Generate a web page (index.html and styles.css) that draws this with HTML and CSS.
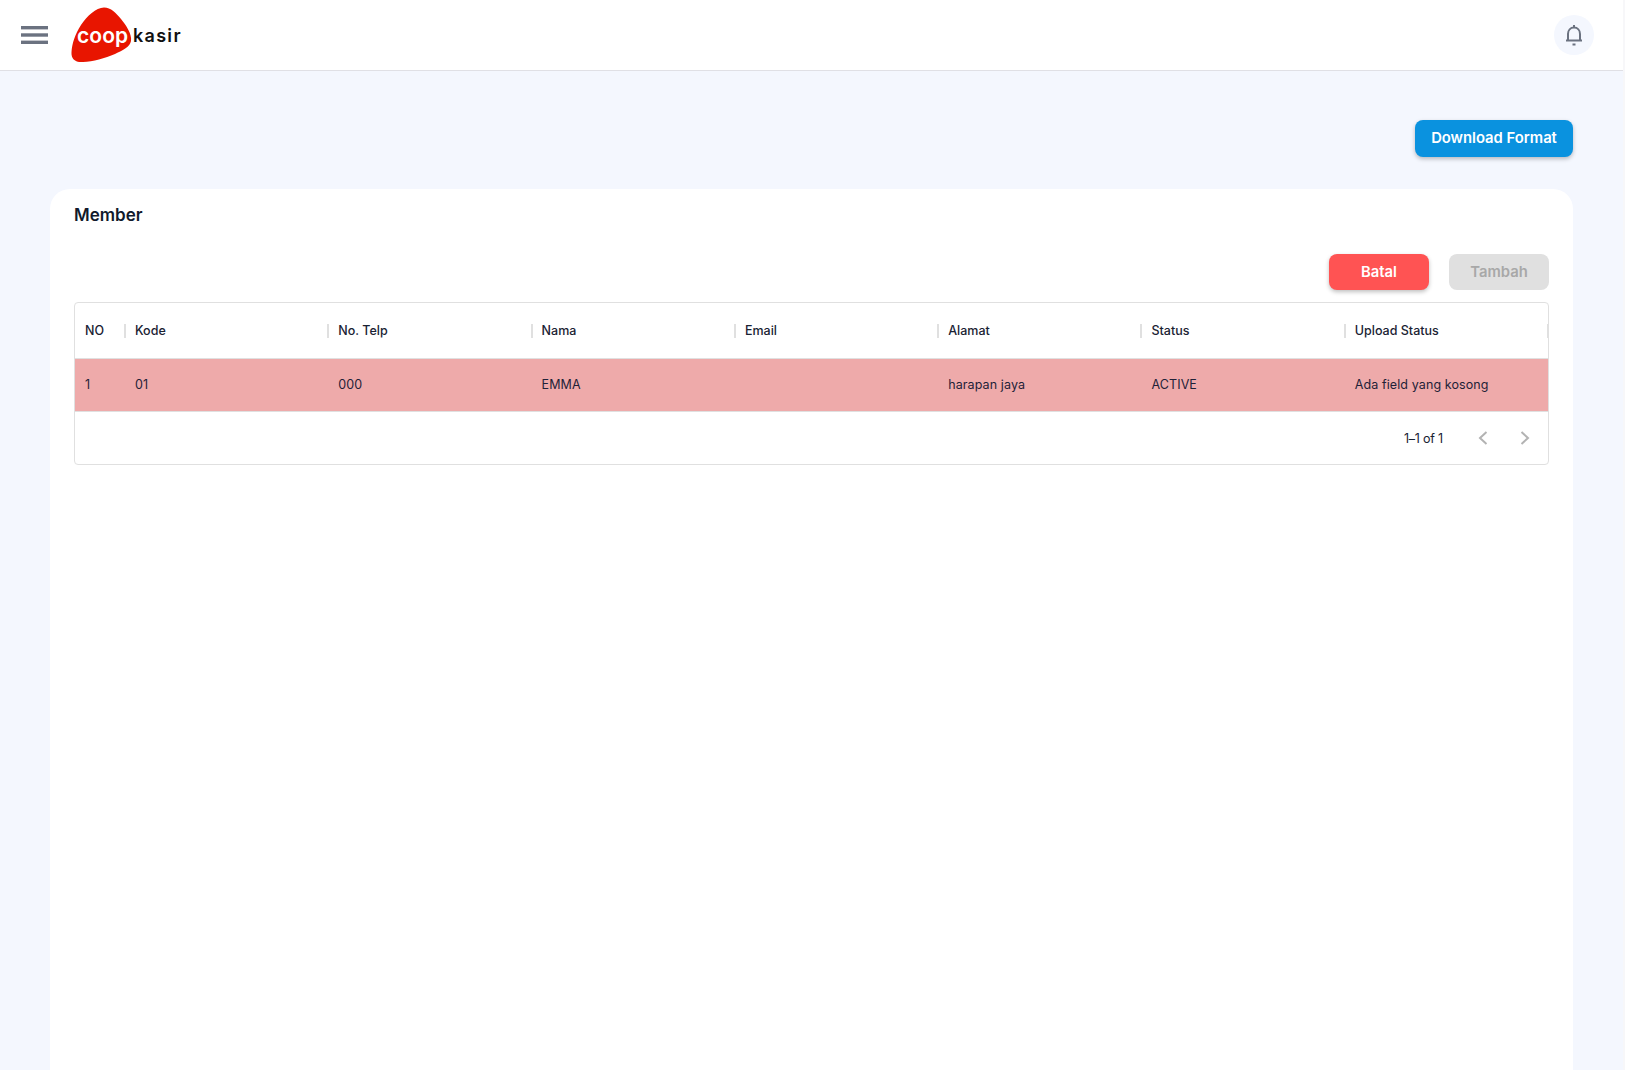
FILE: index.html
```html
<!DOCTYPE html>
<html lang="id">
<head>
<meta charset="utf-8">
<title>Member</title>
<link rel="stylesheet" href="styles.css">
</head>
<body>
<div class="page">
  <header class="topbar">
    <div class="brand">
      <svg class="burger" width="28" height="20" viewBox="0 0 28 20"><rect y="1" width="27" height="3.400" fill="#6b7280"/><rect y="8.300" width="27" height="3.400" fill="#6b7280"/><rect y="15.600" width="27" height="3.400" fill="#6b7280"/></svg>
      <div class="logo">
        <svg class="logo-mark" width="62" height="56" viewBox="0 0 62 56"><path d="M33 .5C40 .5 45 6 50 12C55 18 61 27 60 34C59 40 52 43 44 47C34 51 22 55 12 55C4 55.500 0 52 .5 45C1 37 4 27 10 18C16 9 25 .5 33 .5Z" fill="#e81500"/></svg>
        <span class="coop">coop</span><span class="kasir">kasir</span>
      </div>
    </div>
    <div class="bell">
      <svg width="20" height="22" viewBox="0 0 20 22"><path d="M10 1V3.500M4 16V10C4 6.200 6.500 3.500 10 3.500S16 6.200 16 10V16M2 16.500H18M8.500 20.500H11.500" fill="none" stroke="#6b7280" stroke-width="2"/></svg>
    </div>
  </header>
  <main class="content">
    <div class="actions"><button class="btn btn-download">Download Format</button></div>
    <section class="card">
      <h2 class="card-title">Member</h2>
      <div class="card-actions">
        <button class="btn btn-cancel">Batal</button>
        <button class="btn btn-add" disabled>Tambah</button>
      </div>
      <div class="table">
        <div class="row head">
          <div class="cell c-no">NO</div>
          <div class="cell c-col">Kode</div>
          <div class="cell c-col">No. Telp</div>
          <div class="cell c-col">Nama</div>
          <div class="cell c-col">Email</div>
          <div class="cell c-col">Alamat</div>
          <div class="cell c-col">Status</div>
          <div class="cell c-col c-last">Upload Status</div>
        </div>
        <div class="row data">
          <div class="cell c-no">1</div>
          <div class="cell c-col">01</div>
          <div class="cell c-col">000</div>
          <div class="cell c-col">EMMA</div>
          <div class="cell c-col"></div>
          <div class="cell c-col">harapan jaya</div>
          <div class="cell c-col">ACTIVE</div>
          <div class="cell c-col">Ada field yang kosong</div>
        </div>
        <div class="pager">
          <span class="pager-text">1–1 of 1</span>
          <svg class="chev" width="14" height="16" viewBox="0 0 14 16"><path d="M10.500 2L4 8L10.500 14" fill="none" stroke="#b3b3b3" stroke-width="2"/></svg>
          <svg class="chev" width="14" height="16" viewBox="0 0 14 16"><path d="M3.500 2L10 8L3.500 14" fill="none" stroke="#b3b3b3" stroke-width="2"/></svg>
        </div>
      </div>
    </section>
  </main>
</div>
</body>
</html>
```
FILE: styles.css
```css
* { box-sizing: border-box; }
html, body { margin: 0; height: 100%; overflow: hidden; background: #f7f7f9; }
body { font-family: Inter, "Liberation Sans", sans-serif; color: #1a2233; }
.page { width: 1623px; height: 1070px; overflow: hidden; background: #f4f7fe; }
.topbar { height: 71px; background: #fff; border-bottom: 1px solid #e0e0e5; display: flex; align-items: center; justify-content: space-between; padding: 0 29px 0 21px; }
.brand { display: flex; align-items: center; gap: 22px; }
.burger { display: block; }
.logo { display: flex; align-items: center; position: relative; width: 112px; height: 56px; }
.logo-mark { position: absolute; left: 0; top: 0; }
.coop { position: relative; z-index: 1; font-size: 21px; font-weight: 600; color: #fff; letter-spacing: 0.1px; width: 62px; padding-left: 6px; }
.kasir { font-size: 18px; font-weight: 600; color: #111; letter-spacing: 1.300px; }
.bell { width: 40px; height: 40px; border-radius: 50%; background: #f4f7fe; display: flex; align-items: center; justify-content: center; }
.content { padding: 49px 50px 0 50px; }
.actions { display: flex; justify-content: flex-end; margin-bottom: 32px; }
.btn { border: 0; border-radius: 8px; font-family: Inter, sans-serif; font-weight: 600; font-size: 14.800px; padding: 0 0 2px; }
.btn-download { width: 158px; height: 37px; background: #0a92df; color: #fff; box-shadow: 0 2px 4px rgba(0,0,0,.25); }
.card { background: #fff; border-radius: 20px; padding: 14px 24px 0; height: 900px; }
.card-title { margin: 0; font-size: 17px; line-height: 24px; font-weight: 600; color: #111a2c; }
.card-actions { display: flex; justify-content: flex-end; gap: 20px; margin-top: 27px; margin-bottom: 12px; }
.btn-cancel, .btn-add { width: 100px; height: 36px; padding-bottom: 1px; }
.btn-cancel { background: #ff5353; color: #fff; box-shadow: 0 2px 4px rgba(0,0,0,.25); }
.btn-add { background: #e0e0e0; color: #a8a8a8; }
.table { border: 1px solid #e0e0e0; border-radius: 4px; overflow: hidden; }
.row { display: grid; grid-template-columns: 50px repeat(7, 203.300px); font-size: 12.500px; }
.head { height: 56px; align-items: center; font-weight: 500; border-bottom: 1px solid #e0e0e0; }
.data { height: 53px; align-items: center; background: #eeaaaa; border-bottom: 1px solid #e0e0e0; color: #1f2238; padding-bottom: 2px; letter-spacing: 0.1px; font-weight: 400; }
.cell { padding-left: 10px; white-space: nowrap; position: relative; }
.head .c-col::before { content: ""; position: absolute; left: -1px; top: 50%; margin-top: -7px; width: 2px; height: 14px; background: #e0e0e0; }
.head .c-last::after { content: ""; position: absolute; right: -1px; top: 50%; margin-top: -7px; width: 2px; height: 14px; background: #e0e0e0; }
.pager { height: 52px; display: flex; align-items: center; justify-content: flex-end; padding-right: 16px; font-size: 12.500px; }
.pager-text { margin-right: 33px; margin-top: 1px; letter-spacing: -0.2px; }
.chev { display: block; margin-left: 28px; margin-top: -1px; }
.chev:first-of-type { margin-left: 0; }
```
